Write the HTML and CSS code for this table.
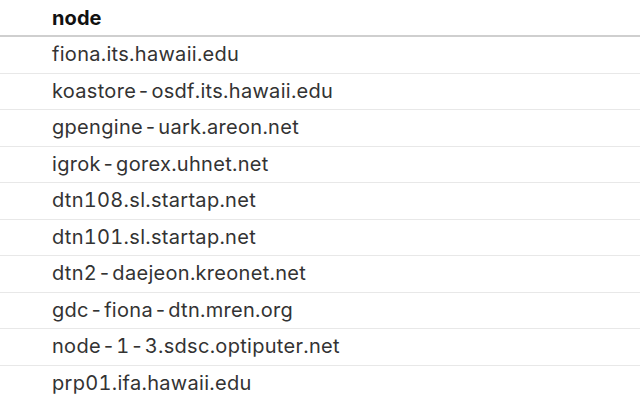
FILE: index.html
```html
<!DOCTYPE html>
<html>
<head>
<meta charset="utf-8">
<link rel="stylesheet" href="styles.css">
</head>
<body>
<table class="nodes">
  <thead>
    <tr><th>node</th></tr>
  </thead>
  <tbody>
    <tr><td>fiona.its.hawaii.edu</td></tr>
    <tr><td>koastore<span class="dash">-</span>osdf.its.hawaii.edu</td></tr>
    <tr><td>gpengine<span class="dash">-</span>uark.areon.net</td></tr>
    <tr><td>igrok<span class="dash">-</span>gorex.uhnet.net</td></tr>
    <tr><td>dtn108.sl.startap.net</td></tr>
    <tr><td>dtn101.sl.startap.net</td></tr>
    <tr><td>dtn2<span class="dash">-</span>daejeon.kreonet.net</td></tr>
    <tr><td>gdc<span class="dash">-</span>fiona<span class="dash">-</span>dtn.mren.org</td></tr>
    <tr><td>node<span class="dash">-</span>1<span class="dash">-</span>3.sdsc.optiputer.net</td></tr>
    <tr><td>prp01.ifa.hawaii.edu</td></tr>
  </tbody>
</table>
</body>
</html>
```
FILE: styles.css
```css
html, body {
  margin: 0;
  padding: 0;
  background: #ffffff;
}
body {
  font-family: Inter, "Liberation Sans", sans-serif;
  overflow: hidden;
}
.nodes {
  width: 100%;
  border-collapse: collapse;
}
.nodes th {
  text-align: left;
  font-weight: 700;
  font-size: 20px;
  color: #111;
  padding: 8px 52px 7px;
  border-bottom: 2px solid #cfcfcf;
  line-height: 20px;
  letter-spacing: 0.1px;
}
.nodes td {
  font-size: 20px;
  color: #333;
  padding: 8px 52px;
  line-height: 19.5px;
  letter-spacing: 0.3px;
  font-variant-numeric: tabular-nums;
  border-bottom: 1px solid #e8e8e8;
}
.dash {
  margin: 0 1px;
}
```
